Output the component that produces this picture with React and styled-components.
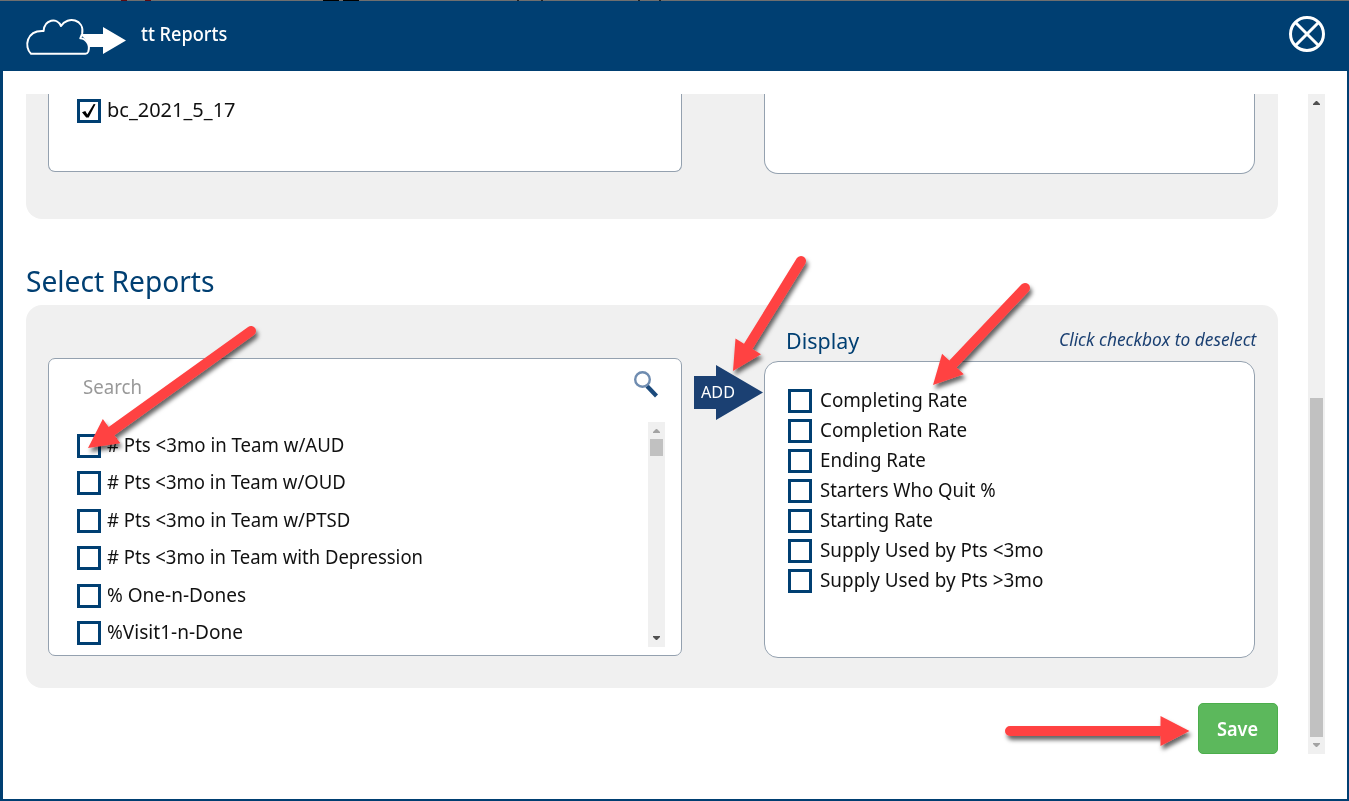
import React from "react";
import styled, { createGlobalStyle } from "styled-components";

const navy = "#003f72";

const GlobalStyle = createGlobalStyle`
  * { box-sizing: border-box; }
  html, body { margin: 0; padding: 0; }
  body {
    width: 1349px;
    height: 801px;
    overflow: hidden;
    font-family: "Noto Sans", "Open Sans", sans-serif;
    color: #111;
    background: #fff;
  }
`;

const Page = styled.div`
  position: relative;
  width: 1349px;
  height: 801px;
  display: flex;
  flex-direction: column;
`;

const Backdrop = styled.div`
  height: 1px;
  background: linear-gradient(90deg, #6f6f6f 121px, #5c0a10 121px 127px, #6f6f6f 127px 145px,
    #5c0a10 145px 151px, #6f6f6f 151px 323px, #000 323px 339px, #6f6f6f 339px 343px, #000 343px 359px,
    #6f6f6f 359px 517px, #222 517px 519px, #6f6f6f 519px 541px, #222 541px 543px, #6f6f6f 543px 638px,
    #222 638px 640px, #6f6f6f 640px 659px, #222 659px 661px, #6f6f6f 661px);
`;

const Dialog = styled.div`
  flex: 1;
  display: flex;
  flex-direction: column;
  border: solid ${navy};
  border-width: 0 2px 2px 3px;
  background: #fff;
`;

const Header = styled.header`
  height: 70px;
  display: flex;
  align-items: flex-start;
  padding: 0 21px 0 22px;
  background: ${navy};
`;

const Title = styled.h1`
  flex: 1;
  margin: 20px 0 0 14px;
  font-weight: 500;
  font-size: 19px;
  line-height: 26px;
  color: #fff;
`;

const CloseButton = styled.button`
  margin: 14px 0 0;
  padding: 0;
  border: 0;
  background: none;
  width: 38px;
  height: 38px;
  svg { display: block; }
`;

const Fit = styled.span`
  display: inline-block;
  white-space: pre;
  transform-origin: 0 50%;
  transform: scaleX(${(p) => p.$x || 1});
`;

const Body = styled.main`
  height: 660px;
  margin: 23px 22px 0 23px;
  display: flex;
  justify-content: space-between;
`;

const Content = styled.div`
  width: 1252px;
  display: flex;
  flex-direction: column;
`;

const Panel = styled.section`
  display: flex;
  flex-shrink: 0;
  background: #f0f0f0;
  height: ${(p) => p.$height}px;
  padding: 0 23px 0 22px;
  border-radius: ${(p) => (p.$cut ? "0 0 16px 16px" : "16px")};
`;

const SourceBox = styled.div`
  width: 634px;
  height: ${(p) => p.$height}px;
  margin-top: ${(p) => p.$top || 0}px;
  background: #fff;
  border: 1px solid #94a1af;
  border-radius: ${(p) => (p.$cut ? "0 0 7px 7px" : "7px")};
  ${(p) => p.$cut && "border-top: 0;"}
  padding-left: 28px;
`;

const TargetColumn = styled.div`
  width: 491px;
`;

const TargetBox = styled.div`
  height: ${(p) => p.$height}px;
  background: #fff;
  border: 1px solid #94a1af;
  border-radius: ${(p) => (p.$cut ? "0 0 14px 14px" : "14px")};
  ${(p) => p.$cut && "border-top: 0;"}
  padding: ${(p) => (p.$cut ? 0 : "23px 0 0 23px")};
`;

const Middle = styled.div`
  width: 82px;
  padding: 60px 0 0 12px;
`;

const AddButton = styled.button`
  display: grid;
  width: 69px;
  height: 55px;
  padding: 0;
  border: 0;
  background: none;
  color: #fff;
  font: 16.5px/53px "Noto Sans", sans-serif;
  text-align: left;
  > * { grid-area: 1 / 1; }
`;

const AddLabel = styled.span`
  display: block;
  width: 62px;
  padding-left: 6.5px;
`;

const Heading = styled.h2`
  margin: 0;
  height: 86px;
  padding-top: 42px;
  font-size: 29px;
  line-height: 40px;
  font-weight: 400;
  color: ${navy};
`;

const SearchRow = styled.div`
  height: 63px;
  display: flex;
  justify-content: space-between;
  padding: 11px 21px 0 6px;
  font-size: 19px;
  line-height: 35px;
  color: #999;
`;

const ListArea = styled.div`
  display: flex;
  justify-content: space-between;
  padding-right: 16px;
  height: 225px;
`;

const List = styled.ul`
  list-style: none;
  margin: 0;
  padding: ${(p) => p.$top || 0}px 0 0;
`;

const Item = styled.li`
  display: flex;
  align-items: flex-start;
  gap: ${(p) => p.$gap}px;
  height: ${(p) => p.$pitch}px;
  font-size: 19.6px;
  line-height: 24px;
  white-space: nowrap;
`;

const Label = styled.span`
  margin-top: 0;
`;

const Box = styled.span`
  width: 24px;
  height: 24px;
  border: 3px solid ${navy};
  background: #fff;
  margin-top: 1px;
  svg { display: block; }
`;

const DisplayHead = styled.div`
  height: 56px;
  display: flex;
  justify-content: space-between;
  padding: 20px 0 0 22px;
  color: ${navy};
`;

const DisplayTitle = styled.h3`
  margin: 0;
  width: 80px;
  font-size: 22px;
  line-height: 30px;
  font-weight: 400;
`;

const Hint = styled.em`
  width: 196px;
  font-size: 17.8px;
  line-height: 29px;
  color: #1b4072;
`;

const Footer = styled.footer`
  display: flex;
  justify-content: flex-end;
  padding-top: 15px;
`;

const SaveButton = styled.button`
  width: 80px;
  height: 51px;
  padding: 1px 0 0 18px;
  text-align: left;
  border: 1px solid #4cae4c;
  border-radius: 5px;
  background: #5cb85c;
  color: #fff;
  font: 600 19.5px/48px "Noto Sans", sans-serif;
`;

const Track = styled.div`
  width: 17px;
  height: ${(p) => p.$height}px;
  background: #f0f0f0;
  display: flex;
  flex-direction: column;
  align-items: center;
`;

const Cap = styled.div`
  height: 17px;
  width: 17px;
  flex-shrink: 0;
  svg { display: block; }
`;

const Thumb = styled.div`
  width: 13px;
  height: ${(p) => p.$height}px;
  margin-top: ${(p) => p.$top}px;
  margin-bottom: auto;
  background: #c1c1c1;
`;

const Overlay = styled.svg`
  position: absolute;
  inset: 0;
  pointer-events: none;
`;

function Scrollbar({ height, top, thumb, upColor, downColor }) {
  return (
    <Track $height={height}>
      <Cap>
        <svg width="17" height="17"><path d="M5 11h7v-1l-3-3h-1l-3 3z" fill={upColor} /></svg>
      </Cap>
      <Thumb $top={top} $height={thumb} />
      <Cap>
        <svg width="17" height="17"><path d="M5 6h7v1l-3 3h-1l-3-3z" fill={downColor} /></svg>
      </Cap>
    </Track>
  );
}

function CheckItem({ text, fit, pitch, gap, checked }) {
  return (
    <Item $pitch={pitch} $gap={gap}>
      <Box>
        {checked && (
          <svg width="18" height="18" viewBox="0 0 18 18">
            <path d="M2 10.200 5.300 9l2 3.500L13.700 2l1.800.2L8.700 15.500 6.200 15.600z" fill="#000" />
          </svg>
        )}
      </Box>
      <Label><Fit $x={fit}>{text}</Fit></Label>
    </Item>
  );
}

function Pointer({ from, to }) {
  const dx = to[0] - from[0];
  const dy = to[1] - from[1];
  const len = Math.hypot(dx, dy);
  const angle = (Math.atan2(dy, dx) * 180) / Math.PI;
  return (
    <g filter="url(#shade)">
      <g transform={`translate(${from[0]} ${from[1]}) rotate(${angle})`} fill="#ff4343">
        <path d={`M0-5H${len - 29}V-15L${len} 0L${len - 29} 15V5H0A5 5 0 0 1 0-5Z`} />
      </g>
    </g>
  );
}

const sources = [
  ["# Pts <3mo in Team w/AUD", 0.95],
  ["# Pts <3mo in Team w/OUD", 0.945],
  ["# Pts <3mo in Team w/PTSD", 0.948],
  ["# Pts <3mo in Team with Depression", 0.944],
  ["% One-n-Dones", 0.971],
  ["%Visit1-n-Done", 0.973],
];

const displayed = [
  ["Completing Rate", 0.96],
  ["Completion Rate", 0.96],
  ["Ending Rate", 0.956],
  ["Starters Who Quit %", 0.945],
  ["Starting Rate", 0.944],
  ["Supply Used by Pts <3mo", 0.964],
  ["Supply Used by Pts >3mo", 0.964],
];

export default function App() {
  return (
    <Page>
      <GlobalStyle />
      <Backdrop />
      <Dialog>
        <Header>
          <svg width="102" height="70" viewBox="25 1 102 70">
            <path d="M80 34H103V27L126 40.500 103 54V47H88L86 40Z" fill="#fff" />
            <path
              d="M31 53.700C24 47.500 26 30 43.600 31C44.500 19.500 57 17 61 26C68 15.500 84.500 19.500 82.200 33.500L80.300 38.300C86 38.800 90.500 44.500 88.300 51.500Q87.500 53.700 85.500 53.700Z"
              fill={navy} stroke="#fff" strokeWidth="2" strokeLinejoin="round"
            />
          </svg>
          <Title><Fit $x={0.955}>tt Reports</Fit></Title>
          <CloseButton aria-label="Close">
            <svg width="38" height="38" viewBox="0 0 38 38" fill="none" stroke="#fff" strokeWidth="3">
              <circle cx="19" cy="19" r="16.500" />
              <path d="M7.500 7.500 30.500 30.500M30.500 7.500 7.500 30.500" />
            </svg>
          </CloseButton>
        </Header>
        <Body>
          <Content>
            <Panel $cut $height={125}>
              <SourceBox $cut $height={78}>
                <List $top={4}>
                  <CheckItem text="bc_2021_5_17" fit={1.02} gap={6} pitch={30} checked />
                </List>
              </SourceBox>
              <Middle />
              <TargetColumn><TargetBox $cut $height={80} /></TargetColumn>
            </Panel>
            <Heading><Fit $x={0.971}>Select Reports</Fit></Heading>
            <Panel $height={383}>
              <SourceBox $top={53} $height={298}>
                <SearchRow>
                  <Fit $x={0.98}>Search</Fit>
                  <svg width="28" height="30" viewBox="632 370 28 30" fill="none">
                    <path d="M647 386 656.500 396" stroke="#1b4a7c" strokeWidth="4.200" />
                    <circle cx="642.500" cy="379.500" r="7.300" stroke="#6f8cb0" strokeWidth="2.400" />
                  </svg>
                </SearchRow>
                <ListArea>
                  <List $top={10.7}>
                    {sources.map(([t, f]) => <CheckItem key={t} text={t} fit={f} gap={6} pitch={37.5} />)}
                  </List>
                  <Scrollbar height={225} top={0} thumb={17} upColor="#a3a3a3" downColor="#505050" />
                </ListArea>
              </SourceBox>
              <Middle>
                <AddButton>
                  <svg width="69" height="55"><path d="M0 11H22V0L69 27.500 22 55V44H0Z" fill="#1b4072" /></svg>
                  <AddLabel><Fit $x={0.98}>ADD</Fit></AddLabel>
                </AddButton>
              </Middle>
              <TargetColumn>
                <DisplayHead>
                  <DisplayTitle><Fit $x={0.975}>Display</Fit></DisplayTitle>
                  <Hint><Fit $x={0.975}>Click checkbox to deselect</Fit></Hint>
                </DisplayHead>
                <TargetBox $height={297}>
                  <List $top={3}>
                    {displayed.map(([t, f]) => <CheckItem key={t} text={t} fit={f} gap={8} pitch={30} />)}
                  </List>
                </TargetBox>
              </TargetColumn>
            </Panel>
            <Footer><SaveButton><Fit $x={0.93}>Save</Fit></SaveButton></Footer>
          </Content>
          <Scrollbar height={660} top={287} thumb={339} upColor="#505050" downColor="#a3a3a3" />
        </Body>
      </Dialog>
      <Overlay width="1349" height="801">
        <defs>
          <filter id="shade" filterUnits="userSpaceOnUse" x="0" y="0" width="1349" height="801">
            <feDropShadow dx="2" dy="4" stdDeviation="2.2" floodColor="#000" floodOpacity="0.6" />
          </filter>
        </defs>
        <Pointer from={[251, 331]} to={[88, 448]} />
        <Pointer from={[801, 261]} to={[733, 371]} />
        <Pointer from={[1025, 288]} to={[933, 385]} />
        <Pointer from={[1010, 731]} to={[1189.500, 731]} />
      </Overlay>
    </Page>
  );
}
